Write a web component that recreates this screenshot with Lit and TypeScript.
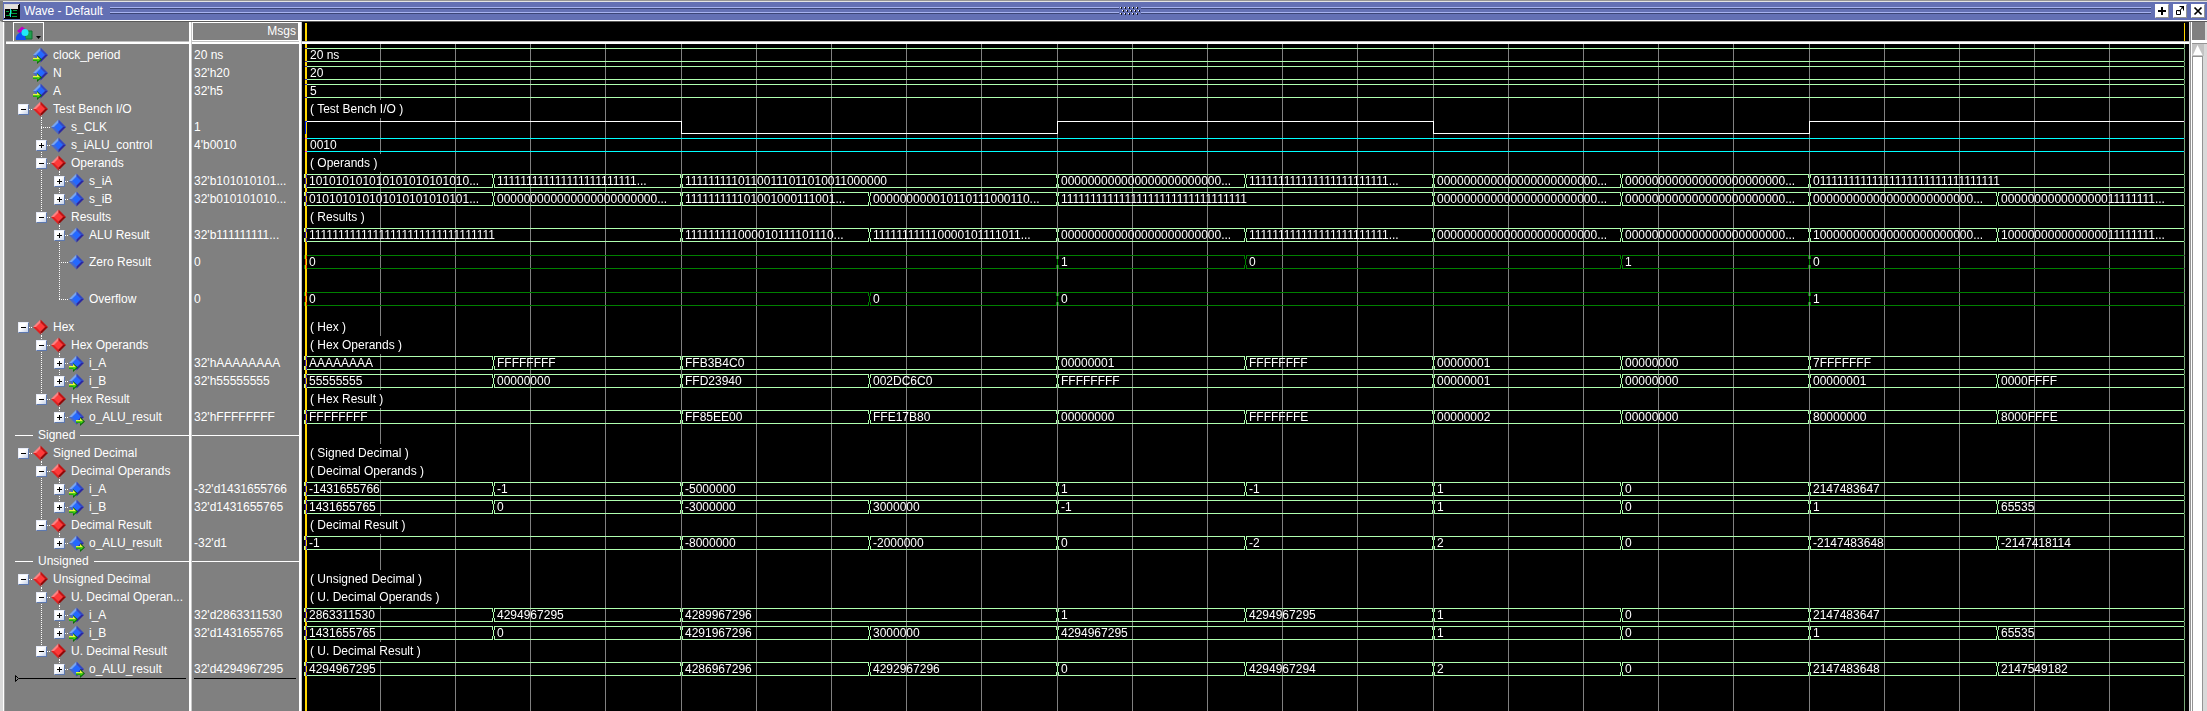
import { LitElement, html, svg, css, nothing } from "lit";
import { customElement, property, state } from "lit/decorators.js";
import { classMap } from "lit/directives/class-map.js";
import { styleMap } from "lit/directives/style-map.js";

type Kind = "group" | "signal" | "in" | "out" | "divider";
type Radix = "bin" | "hex" | "dec" | "udec" | "text";
type Tone = "light" | "dark" | "cyan";
type Sample = [string, number];

interface Row {
  kind: Kind;
  level: number;
  name: string;
  msg?: string;
  size?: "tall" | "taller";
  leaf?: boolean;
  guides?: number[];
  last?: boolean;
  closed?: boolean;
  wave?: Sample[];
  radix?: Radix;
  tone?: Tone;
  clock?: boolean;
}

const A: Sample[] = [
  ["AAAAAAAA", 1], ["FFFFFFFF", 1], ["FFB3B4C0", 2], ["00000001", 1],
  ["FFFFFFFF", 1], ["00000001", 1], ["00000000", 1], ["7FFFFFFF", 2],
];
const B: Sample[] = [
  ["55555555", 1], ["00000000", 1], ["FFD23940", 1], ["002DC6C0", 1], ["FFFFFFFF", 2],
  ["00000001", 1], ["00000000", 1], ["00000001", 1], ["0000FFFF", 1],
];
const RESULT: Sample[] = [
  ["FFFFFFFF", 2], ["FF85EE00", 1], ["FFE17B80", 1], ["00000000", 1], ["FFFFFFFE", 1],
  ["00000002", 1], ["00000000", 1], ["80000000", 1], ["8000FFFE", 1],
];

const group = (level: number, name: string, last = false): Row => ({ kind: "group", level, name, last });
const bus = (kind: Kind, name: string, msg: string, wave: Sample[], radix: Radix, extra: Partial<Row> = {}): Row => ({
  kind, level: 2, name, msg, wave, radix, ...extra,
});

const ROWS: Row[] = [
  { kind: "in", level: 0, name: "clock_period", msg: "20 ns", leaf: true, wave: [["20 ns", 10]], radix: "text" },
  { kind: "in", level: 0, name: "N", msg: "32'h20", leaf: true, wave: [["20", 10]], radix: "text" },
  { kind: "in", level: 0, name: "A", msg: "32'h5", leaf: true, wave: [["5", 10]], radix: "text" },
  group(0, "Test Bench I/O"),
  { kind: "signal", level: 1, name: "s_CLK", msg: "1", leaf: true, clock: true, wave: [["1", 2], ["0", 2], ["1", 2], ["0", 2], ["1", 2]] },
  { kind: "signal", level: 1, name: "s_iALU_control", msg: "4'b0010", wave: [["0010", 10]], radix: "text", tone: "cyan" },
  group(1, "Operands"),
  bus("signal", "s_iA", "32'b101010101...", A, "bin", { guides: [0] }),
  bus("signal", "s_iB", "32'b010101010...", B, "bin", { guides: [0], last: true }),
  group(1, "Results", true),
  bus("signal", "ALU Result", "32'b111111111...", RESULT, "bin"),
  bus("signal", "Zero Result", "0", [["0", 4], ["1", 1], ["0", 2], ["1", 1], ["0", 2]], "text", { size: "tall", leaf: true, tone: "dark" }),
  bus("signal", "Overflow", "0", [["0", 3], ["0", 1], ["0", 4], ["1", 2]], "text", { size: "taller", leaf: true, last: true, tone: "dark" }),
  group(0, "Hex"),
  group(1, "Hex Operands"),
  bus("in", "i_A", "32'hAAAAAAAA", A, "hex", { guides: [0] }),
  bus("in", "i_B", "32'h55555555", B, "hex", { guides: [0], last: true }),
  group(1, "Hex Result", true),
  bus("out", "o_ALU_result", "32'hFFFFFFFF", RESULT, "hex", { last: true }),
  { kind: "divider", level: 0, name: "Signed" },
  group(0, "Signed Decimal"),
  group(1, "Decimal Operands"),
  bus("in", "i_A", "-32'd1431655766", A, "dec", { guides: [0] }),
  bus("in", "i_B", "32'd1431655765", B, "dec", { guides: [0], last: true }),
  group(1, "Decimal Result", true),
  bus("out", "o_ALU_result", "-32'd1", RESULT, "dec", { last: true }),
  { kind: "divider", level: 0, name: "Unsigned" },
  group(0, "Unsigned Decimal"),
  group(1, "U. Decimal Operan...", false),
  bus("in", "i_A", "32'd2863311530", A, "udec", { guides: [0] }),
  bus("in", "i_B", "32'd1431655765", B, "udec", { guides: [0], last: true }),
  group(1, "U. Decimal Result", true),
  bus("out", "o_ALU_result", "32'd4294967295", RESULT, "udec", { last: true }),
];

function format(value: string, span: number, radix?: Radix): string {
  const n = parseInt(value, 16);
  switch (radix) {
    case "bin": {
      const bits = n.toString(2).padStart(32, "0");
      return span > 1 ? bits : bits.slice(0, 24) + "...";
    }
    case "dec": return String(n | 0);
    case "udec": return String(n);
    default: return value;
  }
}

@customElement("signal-icon")
export class SignalIcon extends LitElement {
  static styles = css`
    :host { display: block; width: 18px; height: 18px; }
    svg { display: block; }
  `;
  @property() kind: Kind = "signal";

  render() {
    const c = this.kind === "group"
      ? ["#ff8080", "#e02020", "#ff3a3a", "#c01414", "#900808"]
      : ["#78a4f0", "#4868c8", "#2468ff", "#3448c0", "#2c28a0"];
    const arrow = (x: number) => svg`
      <path d=${`M${x} 12h4v-3l5 4.500l-5 4.500v-3h-4z`} fill="#0a6a0a"/>
      <path d=${`M${x} 12h4v-2l3.500 3.500h-7.500z`} fill="#e8f840"/>
      <path d=${`M${x} 13.500h7.500l-3 2.500v-1.500h-4.500z`} fill="#3ae010"/>`;
    return html`<svg width="18" height="18" viewBox="0 0 18 18" aria-hidden="true">
      <path d="M1 9L8.500 1.500V5L4.500 9z" fill=${c[0]}/>
      <path d="M8.500 1.500L16 9H12.500L8.500 5z" fill=${c[3]}/>
      <path d="M1 9H4.500L8.500 13V16.500z" fill=${c[1]}/>
      <path d="M16 9L8.500 16.500V13L12.500 9z" fill=${c[4]}/>
      <path d="M8.500 4.500L13 9L8.500 13.500L4 9z" fill=${c[2]}/>
      ${this.kind === "in" ? arrow(1) : this.kind === "out" ? arrow(8) : nothing}
    </svg>`;
  }
}

@customElement("name-tree")
export class NameTree extends LitElement {
  static styles = css`
    :host { display: block; }
    .list { list-style: none; margin: 0; padding: 2px 0 0 9px; }
    .row { display: flex; height: 18px; align-items: stretch; }
    .tall { height: 36px; }
    .taller { height: 38px; }
    .cell {
      --v: repeating-linear-gradient(to bottom, #fff 0 1px, transparent 1px 2px);
      --h: repeating-linear-gradient(to right, #fff 0 1px, transparent 1px 2px);
      flex: none; width: 18px; display: flex; align-items: center; justify-content: center;
      background-repeat: no-repeat; background-position: 9px 0;
    }
    .through { background-image: var(--v); background-size: 1px 100%; }
    .stub { background-image: var(--h); background-size: 9px 1px; background-position: 9px 50%; }
    .branch { background-image: var(--v), var(--h); background-size: 1px 100%, 9px 1px; background-position: 9px 0, 9px 50%; }
    .corner { background-image: var(--v), var(--h); background-size: 1px 50%, 9px 1px; background-position: 9px 0, 9px 50%; }
    .open { background-image: var(--v); background-size: 1px 50%; background-position: 9px 100%; }
    .toggle {
      width: 11px; height: 11px; padding: 0; border: 1px solid #e8ecf8; border-right-color: #5c78b0;
      border-bottom-color: #5c78b0; border-radius: 1px; background: linear-gradient(135deg, #fff 40%, #c4d0e8);
      display: block;
    }
    .toggle svg { display: block; }
    .name { padding-left: 3px; line-height: 18px; align-self: center; white-space: pre; }
    .divider { gap: 5px; align-items: center; padding-left: 1px; }
    .rule { height: 1px; background: #fff; flex: 1; }
    .lead { flex: none; width: 18px; }
    .drop { display: flex; align-items: center; height: 9px; margin: -4px 3px 0 1px; }
    .drop svg { display: block; flex: none; }
    .dropline { flex: 1; height: 1px; background: #000; }
  `;

  private cells(r: Row) {
    const out = [];
    for (let i = 0; i < r.level; i++) {
      out.push(html`<span class=${classMap({ cell: true, through: !!r.guides?.includes(i - 1) })}></span>`);
    }
    const link = r.level === 0 ? (r.leaf ? "" : "stub") : r.last ? "corner" : "branch";
    out.push(html`<span class="cell ${link}">${r.leaf ? nothing : html`
      <button class="toggle" type="button" aria-label="Toggle ${r.name}">
        <svg width="9" height="9" viewBox="0 0 9 9" shape-rendering="crispEdges">
          <path d=${r.kind === "group" ? "M2 4h5v1h-5z" : "M2 4h2v-2h1v2h2v1h-2v2h-1v-2h-2z"} fill="#000"/>
        </svg>
      </button>`}</span>`);
    out.push(html`<span class="cell ${r.kind === "group" ? "open" : ""}"><signal-icon .kind=${r.kind}></signal-icon></span>`);
    return out;
  }

  render() {
    return html`<ul class="list">
      ${ROWS.map((r) => r.kind === "divider"
        ? html`<li class="row divider"><span class="rule lead"></span><span>${r.name}</span><span class="rule"></span></li>`
        : html`<li class="row ${r.size ?? ""}">${this.cells(r)}<span class="name">${r.name}</span></li>`)}
      <li class="drop"><svg width="4" height="7" viewBox="0 0 4 7"><path d="M.5 .5L3.500 3.500L.5 6.500z" fill="none" stroke="#000"/></svg><span class="dropline"></span></li>
    </ul>`;
  }
}

@customElement("value-list")
export class ValueList extends LitElement {
  static styles = css`
    :host { display: block; }
    .list { list-style: none; margin: 0; padding: 2px 0 0; }
    .row { height: 18px; line-height: 18px; padding-left: 2px; white-space: pre; }
    .tall { height: 36px; line-height: 36px; }
    .taller { height: 38px; line-height: 38px; }
    .divider { display: flex; align-items: center; padding: 0; }
    .rule { height: 1px; flex: 1; background: #fff; }
    .drop { height: 1px; margin: 0 3px 0 2px; background: #000; }
  `;
  render() {
    return html`<ul class="list">
      ${ROWS.map((r) => r.kind === "divider"
        ? html`<li class="row divider"><span class="rule"></span></li>`
        : html`<li class="row ${r.size ?? ""}">${r.msg ?? ""}</li>`)}
      <li class="drop"></li>
    </ul>`;
  }
}

@customElement("wave-canvas")
export class WaveCanvas extends LitElement {
  static styles = css`
    :host { display: grid; grid-template: minmax(0, 1fr) / minmax(0, 1fr); padding: 0 4px 0 3px; background: #000; color: #fff; isolation: isolate; }
    .grid, .rows, .cursors { grid-area: 1 / 1; }
    .grid { display: flex; }
    .major { flex: 1 1 0; display: flex; }
    .minor { flex: 1 1 0; flex: 0 0 round(down, 20%, 1px); box-sizing: border-box; border-left: 1px solid #808080; }
    .minor:last-child { flex: 1 1 0; }
    .rows { padding-top: 2px; }
    .row { display: flex; height: 18px; align-items: center; }
    .tall { height: 36px; }
    .taller { height: 38px; }
    .label { background: #000; line-height: 18px; padding: 0 4px 0 5px; white-space: pre; }
    .seg { flex: 1 1 0; min-width: 0; height: 14px; display: flex; color: #b0ffb0; }
    .dark .seg { color: #008000; }
    .cyan .seg { color: #00ffff; }
    .edge { flex: none; display: block; margin-left: -1px; }
    .box {
      flex: 1; min-width: 0; box-sizing: border-box; height: 14px; padding-left: 3px;
      border: 0 solid currentColor; border-width: 1px 0; line-height: 12px; margin-left: -1px; margin-right: 1px;
    }
    .seg:last-child .box { margin-right: 0; }
    .plain .box { margin: 0; padding-left: 5px; }
    .text { color: #fff; white-space: pre; }
    .clock { align-items: flex-start; padding-top: 3px; box-sizing: border-box; }
    .level { flex: 1 1 0; height: 13px; box-sizing: border-box; border: 0 solid #fff; border-left-width: 1px; }
    .level:first-child { border-left-width: 1px; }
    .high { border-top-width: 1px; }
    .low { border-bottom-width: 1px; }
    .cursors { display: flex; justify-content: space-between; mix-blend-mode: difference; }
    .cursor { width: 2px; background: #ffd700; }
    .grid, .cursors { pointer-events: none; }
    .blank { border-left-color: #000; }
    .end { width: 1px; background: #78a878; }
  `;

  private edge() {
    return html`<svg class="edge" width="3" height="14" viewBox="0 0 3 14" shape-rendering="crispEdges" aria-hidden="true">
      <path d="M0 0h1v4h-1zM2 0h1v4h-1zM1 4h1v6h-1zM0 10h1v4h-1zM2 10h1v4h-1z" fill="currentColor"/></svg>`;
  }

  private row(r: Row) {
    if (r.kind === "group") return html`<div class="row"><span class="label">( ${r.name === "U. Decimal Operan..." ? "U. Decimal Operands" : r.name} )</span></div>`;
    if (!r.wave) return html`<div class="row"></div>`;
    if (r.clock) {
      return html`<div class="row clock">${r.wave.map(([v, n]) =>
        html`<span class="level ${v === "1" ? "high" : "low"}" style=${styleMap({ flexGrow: String(n) })}></span>`)}</div>`;
    }
    const plain = r.wave.length === 1;
    return html`<div class="row ${r.tone ?? ""} ${r.size ?? ""} ${plain ? "plain" : ""}">${r.wave.map(([v, n]) => html`
      <span class="seg" style=${styleMap({ flexGrow: String(n) })}>${plain ? nothing : this.edge()}<span class="box"><span class="text">${format(v, n, r.radix)}</span></span></span>`)}</div>`;
  }

  render() {
    const five = [0, 1, 2, 3, 4];
    return html`
      <div class="grid">${five.map((m) => html`<div class="major">${five.map((k) =>
        html`<div class="minor ${m + k === 0 ? "blank" : ""}"></div>`)}</div>`)}</div>
      <div class="rows">${ROWS.map((r) => this.row(r))}</div>
      <div class="cursors"><span class="cursor"></span><span class="end"></span></div>`;
  }
}

@customElement("app-root")
export class AppRoot extends LitElement {
  static styles = css`
    :host {
      display: flex; flex-direction: column; height: 100vh; overflow: hidden; box-sizing: border-box;
      font: 12px/18px "Liberation Sans", Arial, sans-serif; color: #fff; background: #808080;
    }
    .titlebar {
      flex: none; display: flex; align-items: center; height: 18px; margin-left: 3px; padding-left: 1px;
      background: #6370b4; border-top: 1px solid #e4e4e4; border-bottom: 1px solid #fff;
      box-shadow: 0 -1px #949494;
    }
    .top { flex: none; height: 1px; background: #949494; }
    .title { margin: 0 7px 0 4px; font: inherit; font-weight: 400; }
    .grooves { flex: 1; height: 8px; background: linear-gradient(#a8b4f0 0 1px, #3c4678 1px 2px, #6370b4 2px 5px, #a8b4f0 5px 6px, #3c4678 6px 7px, #6370b4 7px); }
    .grip { flex: none; display: block; margin: 0 1px; }
    .winbtns { display: flex; gap: 4px; margin: 0 2px 0 4px; }
    .winbtn {
      width: 14px; height: 14px; padding: 0; border: 1px solid #fff; border-right-color: #949494;
      border-bottom-color: #949494; background: #fff; display: flex; align-items: center; justify-content: center;
    }
    .winbtn svg { display: block; }
    .main {
      flex: 1; min-height: 0; display: flex; border-left: 3px solid #d9d9d9; border-top: 1px solid #5a5a5a;
    }
    .frame { flex: none; width: 2px; background: linear-gradient(to right, #fff 0 1px, #a0a0a0 1px 2px); }
    .pane { flex: none; display: flex; flex-direction: column; min-height: 0; overflow: hidden; background: #808080; }
    .names { width: 184px; }
    .values { width: 107px; }
    .waves { flex: 1; min-width: 0; }
    .head { flex: none; height: 19px; box-sizing: border-box; }
    .rule { flex: none; height: 3px; box-sizing: border-box; background: #fff; border-top: 1px solid #c0c0c0; }
    .names .rule { margin-left: 1px; }
    .sash { flex: none; width: 3px; box-sizing: border-box; background: #fff; border-right: 1px solid #c8c8c8; }
    .sash.first { width: 3px; }
    .names .head { display: flex; padding-left: 8px; }
    .tool {
      width: 31px; padding: 0; border: 1px solid #fff; border-bottom: 0; background: #808080; display: flex;
      align-items: flex-end; justify-content: center;
    }
    .tool svg { display: block; }
    .msgs { border: 1px solid #fff; text-align: right; padding-right: 2px; line-height: 17px; }
    .time { background: #000; display: flex; justify-content: space-between; padding: 1px 4px 0 3px; }
    .mark { width: 2px; background: #ffd700; }
    .mark.end { width: 1px; }
    .fill { flex: 1; min-height: 0; }
    .scroll { flex: none; width: 18px; display: flex; background: #d9d9d9; }
    .edge { flex: none; width: 3px; box-sizing: border-box; background: #fff; border-left: 1px solid #d9d9d9; box-shadow: inset 1px 0 #949494; }
    .bar { flex: 1; display: flex; flex-direction: column; }
    .block { flex: none; height: 18px; margin-right: 2px; background: #808080; }
    .barrule { flex: none; height: 3px; background: #fff; border-bottom: 1px solid #949494; }
    .arrow { flex: none; border: 0; padding: 0; background: #c3c3c3; height: 12px; width: 12px; display: block; }
    .arrow svg { display: block; }
    .thumb { flex: 1; width: 11px; box-sizing: border-box; background: #fff; border-left: 1px solid #949494; border-right: 1px solid #949494; border-top: 1px solid #949494; }
  `;

  @state() private title_ = "Wave - Default";

  render() {
    const dots = [];
    for (let r = 0; r < 3; r++) {
      for (let i = 0; i < 5; i++) {
        const x = i * 4 + (r === 1 ? 2 : 0), y = r * 3;
        dots.push(svg`<path d=${`M${x} ${y}h1v1h-1z`} fill="#fff"/><path d=${`M${x + 1} ${y + 1}h1v1h-1zM${x + 1} ${y}h1v1h-1z`} fill="#111"/>`);
      }
    }
    return html`
      <div class="top"></div>
      <header class="titlebar">
        <svg width="16" height="15" viewBox="0 0 16 15" shape-rendering="crispEdges" aria-hidden="true">
          <path d="M0 0h16v15h-16z" fill="#000"/><path d="M0 0h15v1h-14v13h-1z" fill="#d9d9d9"/><path d="M1 1h13v4h-13z" fill="#e4e0dc"/>
          <path d="M2 7h3v1h-3zM7 6h1v3h5v1h-6zM9 6h4v1h-4zM2 11h3v-2h1v3h-4zM8 12h5v1h-5z" fill="#00a040"/>
          <path d="M6 5h1v8h-1z" fill="#20e0e0"/>
        </svg>
        <h1 class="title">${this.title_}</h1>
        <span class="grooves"></span>
        <svg class="grip" width="20" height="8" viewBox="0 0 20 8" shape-rendering="crispEdges" aria-hidden="true">${dots}</svg>
        <span class="grooves"></span>
        <div class="winbtns">
          <button class="winbtn" type="button" aria-label="Add"><svg width="10" height="10" viewBox="0 0 10 10"><path d="M4 1h2v3h3v2h-3v3h-2v-3h-3v-2h3z" fill="#000"/></svg></button>
          <button class="winbtn" type="button" aria-label="Undock"><svg width="10" height="10" viewBox="0 0 10 10"><path d="M1.500 4.500h4v4h-4zM4.500 .5h4v4M8.500 .5L4 5.500" fill="none" stroke="#000"/><path d="M5 0h4v4z" fill="#000"/></svg></button>
          <button class="winbtn" type="button" aria-label="Close"><svg width="10" height="10" viewBox="0 0 10 10"><path d="M1.500 1.500L8.500 8.500M8.500 1.500L1.500 8.500" stroke="#000" stroke-width="1.700"/></svg></button>
        </div>
      </header>
      <main class="main">
        <div class="frame"></div>
        <section class="pane names">
          <div class="head">
            <button class="tool" type="button" aria-label="Objects">
              <svg width="27" height="15" viewBox="0 0 27 15" aria-hidden="true">
                <path d="M2 5L7 0.500L13 5L7 9z" fill="#c000c0"/><path d="M10 5h7v8h-7z" fill="#20a050" stroke="#107030"/>
                <path d="M1 14Q0 9 5 6.500L9 6L11 14z" fill="#1050f0"/><circle cx="10" cy="6.500" r="3.500" fill="#20e8f8"/>
                <path d="M21 10h5l-2.500 3z" fill="#000"/>
              </svg>
            </button>
          </div>
          <div class="rule"></div>
          <name-tree class="fill"></name-tree>
        </section>
        <div class="sash first"></div>
        <section class="pane values">
          <div class="head msgs">Msgs</div>
          <div class="rule"></div>
          <value-list class="fill"></value-list>
        </section>
        <div class="sash"></div>
        <section class="pane waves">
          <div class="head time"><span class="mark"></span><span class="mark end"></span></div>
          <div class="rule"></div>
          <wave-canvas class="fill"></wave-canvas>
        </section>
        <div class="scroll">
          <div class="edge"></div>
          <div class="bar">
            <div class="block"></div>
            <div class="barrule"></div>
            <button class="arrow" type="button" aria-label="Scroll up"><svg width="12" height="12" viewBox="0 0 12 12"><path d="M5.500 1L10.500 11H1z" fill="#fff"/></svg></button>
            <div class="thumb"></div>
          </div>
        </div>
      </main>`;
  }
}
